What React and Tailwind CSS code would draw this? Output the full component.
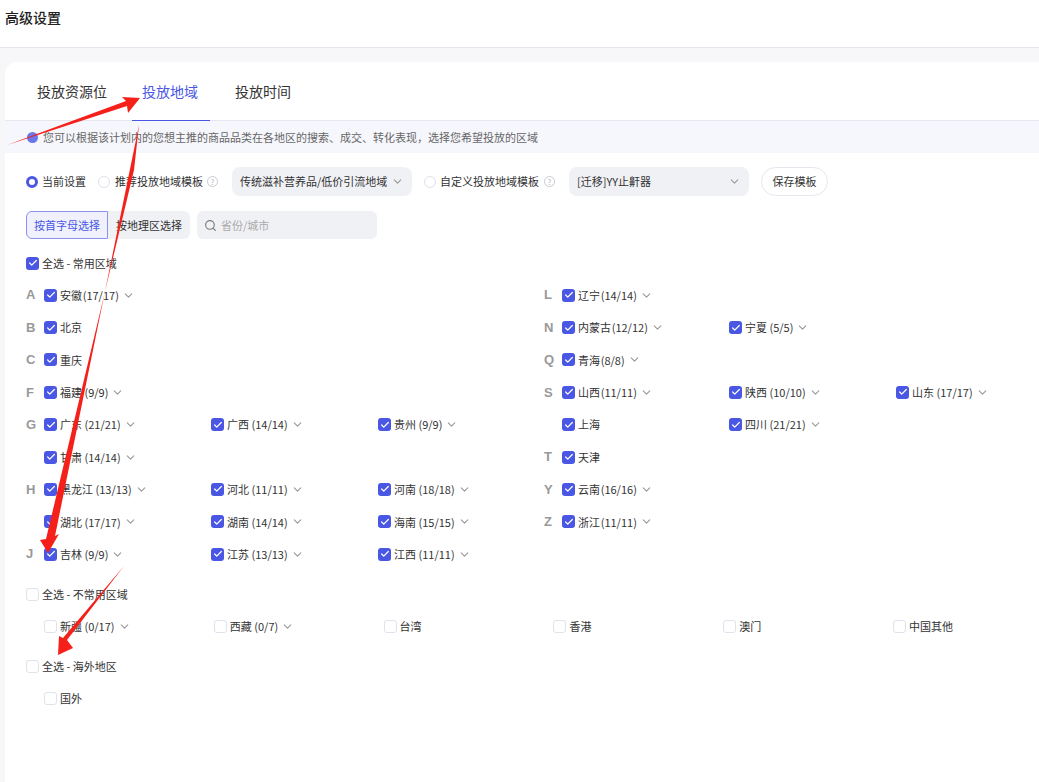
import React from "react";
import { Check, ChevronDown, Search } from "lucide-react";

const leftRows = [
  ["A", [["安徽\u200a(17/17)", true]]],
  ["B", [["北京", false]]],
  ["C", [["重庆", false]]],
  ["F", [["福建 (9/9)", true]]],
  ["G", [["广东 (21/21)", true], ["广西 (14/14)", true], ["贵州 (9/9)", true]]],
  ["", [["甘肃 (14/14)", true]]],
  ["H", [["黑龙江 (13/13)", true], ["河北 (11/11)", true], ["河南 (18/18)", true]]],
  ["", [["湖北 (17/17)", true], ["湖南 (14/14)", true], ["海南 (15/15)", true]]],
  ["J", [["吉林 (9/9)", true], ["江苏 (13/13)", true], ["江西 (11/11)", true]]],
];

const rightRows = [
  ["L", [["辽宁\u200a(14/14)", true]]],
  ["N", [["内蒙古\u200a(12/12)", true], ["宁夏 (5/5)", true]]],
  ["Q", [["青海\u200a(8/8)", true]]],
  ["S", [["山西\u200a(11/11)", true], ["陕西 (10/10)", true], ["山东 (17/17)", true]]],
  ["", [["上海", false], ["四川 (21/21)", true]]],
  ["T", [["天津", false]]],
  ["Y", [["云南\u200a(16/16)", true]]],
  ["Z", [["浙江\u200a(11/11)", true]]],
  ["", []],
];

const rareAreas = [
  ["新疆 (0/17)", true],
  ["西藏 (0/7)", true],
  ["台湾", false],
  ["香港", false],
  ["澳门", false],
  ["中国其他", false],
];

const Box = ({ checked }) =>
  checked ? (
    <span className="flex h-[13px] w-[13px] shrink-0 items-center justify-center rounded-[3px] bg-[#4a57e4]">
      <Check size={10} strokeWidth={3} className="text-white" />
    </span>
  ) : (
    <span className="block h-[13px] w-[13px] shrink-0 rounded-[3px] border border-[#dfe1ec] bg-white" />
  );

const Radio = ({ active, className }) =>
  active ? (
    <span className={`block h-[12px] w-[12px] shrink-0 rounded-full border-[3px] border-[#4a57e4] bg-white ${className}`} />
  ) : (
    <span className={`block h-[12px] w-[12px] shrink-0 rounded-full border border-[#dfe1ec] bg-white ${className}`} />
  );

const Help = ({ className }) => (
  <span className={`flex h-[11px] w-[11px] shrink-0 items-center justify-center rounded-full border border-[#c9cbd3] text-[8px] leading-none text-[#b5b7c0] ${className}`}>
    ?
  </span>
);

const Area = ({ label, arrow }) => (
  <div className="flex items-center">
    <Box checked />
    <span className="ml-[3px] whitespace-nowrap text-[#333]">{label}</span>
    {arrow && <ChevronDown size={13} className="ml-[3px] text-[#999]" />}
  </div>
);

const RegionRows = ({ rows }) => (
  <div className="flex flex-col">
    {rows.map(([letter, items], i) => (
      <div key={i} className="flex h-[32.375px] items-center">
        <span className="w-[18px] shrink-0 font-['Liberation_Sans'] text-[13px] font-bold text-[#999]">{letter}</span>
        {items.map(([label, arrow]) => (
          <div key={label} className="w-[167px] shrink-0">
            <Area label={label} arrow={arrow} />
          </div>
        ))}
      </div>
    ))}
  </div>
);

const Select = ({ label, className }) => (
  <div className={`flex h-[29px] w-[180px] shrink-0 items-center justify-between rounded-lg bg-[#f0f1f5] px-2 text-[#333] ${className}`}>
    <span className="whitespace-nowrap">{label}</span>
    <ChevronDown size={13} className="text-[#999]" />
  </div>
);

const Arrows = () => (
  <svg className="pointer-events-none absolute left-0 top-0" width="1039" height="782" viewBox="0 0 1039 782">
    <polygon fill="#f5201a" points="7,145 126,101 122,97 140,98 128,113 127,106" />
    <polygon fill="#f5201a" points="139,125 55,536 59,534 48,553 40,540 46,539 134,170" />
    <polygon fill="#f5201a" points="124,566 67,640 73,648 58,655 59,636 63,638" />
  </svg>
);

export default function App() {
  return (
    <div
      className="relative h-[782px] w-[1039px] overflow-hidden bg-[#f7f7f9] text-[11px]"
      style={{ fontFamily: '"Noto Sans CJK SC", "Liberation Sans", sans-serif' }}
    >
      {/* Header */}
      <div className="flex h-[48px] items-start border-b border-[#e6e6ef] bg-white pl-[5px] pt-[8px]">
        <span className="text-[14px] font-medium leading-[18px] text-[#222]">高级设置</span>
      </div>

      {/* Card */}
      <div className="ml-[5px] mt-[14px] h-[720px] rounded-tl-xl bg-white">
        {/* Tabs */}
        <div className="flex h-[59px] border-b border-[#e6e6ef] pl-[21px] text-[14px] text-[#333]">
          <div className="flex h-[59px] w-[106px] items-center pl-[11px]">投放资源位</div>
          <div className="flex h-[59px] w-[78px] items-center justify-center border-b border-[#4a57e4] pr-[2px] text-[#4a57e4]">
            投放地域
          </div>
          <div className="flex h-[59px] items-center pl-[25px]">投放时间</div>
        </div>

        {/* Notice */}
        <div className="flex h-[32px] items-center gap-[5px] bg-[#f6f7fc] pl-[22px] text-[#666]">
          <span className="h-[11px] w-[11px] shrink-0 rounded-full bg-[#6a76ea]" />
          <span className="whitespace-nowrap">您可以根据该计划内的您想主推的商品品类在各地区的搜索、成交、转化表现，选择您希望投放的区域</span>
        </div>

        {/* Template row */}
        <div className="mt-[14px] flex h-[29px] items-center pl-[21px] text-[#333]">
          <Radio active />
          <span className="ml-[4px] whitespace-nowrap">当前设置</span>
          <Radio className="ml-[12px]" />
          <span className="ml-[5px] whitespace-nowrap">推荐投放地域模板</span>
          <Help className="ml-[4px]" />
          <Select label="传统滋补营养品/低价引流地域" className="ml-[14px]" />
          <Radio className="ml-[12px]" />
          <span className="ml-[4px] whitespace-nowrap">自定义投放地域模板</span>
          <Help className="ml-[5px]" />
          <Select label="[迁移]YY止鼾器" className="ml-[14px]" />
          <div className="ml-[12px] flex h-[29px] w-[67px] items-center justify-center rounded-full border border-[#e6e6ef] bg-white">
            保存模板
          </div>
        </div>

        {/* Filter row */}
        <div className="mt-[15px] flex h-[28px] items-center pl-[21px]">
          <div className="flex h-[28px] w-[82px] items-center justify-center rounded-l-md border border-[#8a94ee] bg-[#f0f1fd] text-[#4a57e4]">
            按首字母选择
          </div>
          <div className="flex h-[28px] w-[82px] items-center justify-center rounded-r-md bg-[#f0f1f5] text-[#333]">
            按地理区选择
          </div>
          <div className="ml-[7px] flex h-[28px] w-[180px] items-center gap-[4px] rounded-md bg-[#f0f1f5] pl-[7px] text-[#aaa]">
            <Search size={13} className="text-[#777]" />
            <span>省份/城市</span>
          </div>
        </div>

        {/* Common areas */}
        <div className="mt-[8px] flex h-[32px] items-center pl-[21px]">
          <Box checked />
          <span className="ml-[3px] text-[#333]">全选 - 常用区域</span>
        </div>

        <div className="grid grid-cols-[518px_1fr] pl-[21px]">
          <RegionRows rows={leftRows} />
          <RegionRows rows={rightRows} />
        </div>

        {/* Rare areas */}
        <div className="mt-[8px] flex h-[32px] items-center pl-[21px]">
          <Box />
          <span className="ml-[3px] text-[#333]">全选 - 不常用区域</span>
        </div>
        <div className="flex h-[32px] items-center pl-[39px]">
          {rareAreas.map(([label, arrow]) => (
            <div key={label} className="flex w-[169.8px] shrink-0 items-center">
              <Box />
              <span className="ml-[3px] whitespace-nowrap text-[#333]">{label}</span>
              {arrow && <ChevronDown size={13} className="ml-[3px] text-[#999]" />}
            </div>
          ))}
        </div>

        {/* Overseas */}
        <div className="mt-[8px] flex h-[32px] items-center pl-[21px]">
          <Box />
          <span className="ml-[3px] text-[#333]">全选 - 海外地区</span>
        </div>
        <div className="flex h-[32px] items-center pl-[39px]">
          <Box />
          <span className="ml-[3px] text-[#333]">国外</span>
        </div>
      </div>

      <Arrows />
    </div>
  );
}
